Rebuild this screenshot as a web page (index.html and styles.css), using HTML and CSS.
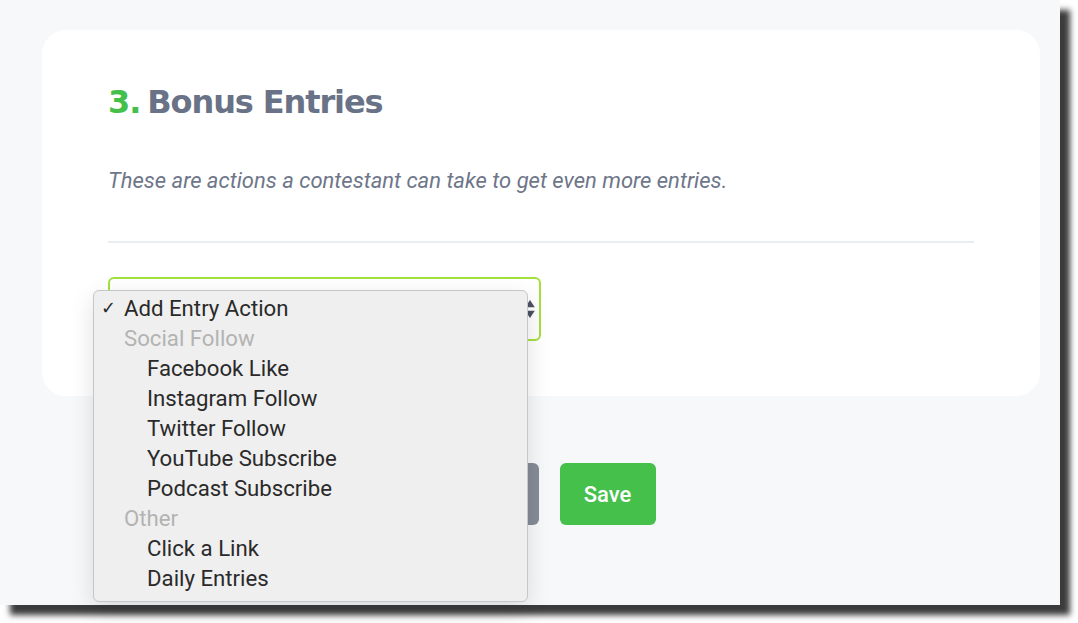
FILE: index.html
```html
<!DOCTYPE html>
<html lang="en">
<head>
<meta charset="utf-8">
<title>Bonus Entries</title>
<link rel="stylesheet" href="styles.css">
</head>
<body>
<div class="window">
  <section class="card">
    <h2 class="title"><span class="num">3.</span> Bonus Entries</h2>
    <p class="subtitle">These are actions a contestant can take to get even more entries.</p>
    <hr class="divider">
    <div class="select">
      <svg class="select-arrows" width="10" height="20" viewBox="0 0 10 20"><path d="M5 1 L9.8 8.2 H0.2 Z M5 19 L9.8 11.8 H0.2 Z" fill="#4b5162"/></svg>
    </div>
  </section>
  <div class="actions">
    <button class="btn btn-gray"></button>
    <button class="btn btn-green">Save</button>
  </div>
  <ul class="menu">
    <li class="item checked"><span class="check">✓</span>Add Entry Action</li>
    <li class="group">Social Follow</li>
    <li class="item sub">Facebook Like</li>
    <li class="item sub">Instagram Follow</li>
    <li class="item sub">Twitter Follow</li>
    <li class="item sub">YouTube Subscribe</li>
    <li class="item sub">Podcast Subscribe</li>
    <li class="group">Other</li>
    <li class="item sub">Click a Link</li>
    <li class="item sub">Daily Entries</li>
  </ul>
</div>
</body>
</html>
```
FILE: styles.css
```css
* { box-sizing: border-box; }
html, body { margin: 0; padding: 0; background: #ffffff; }
body { width: 1078px; height: 623px; overflow: hidden; }

.window {
  position: relative;
  width: 1060px;
  height: 605px;
  background: #f7f8fa;
  box-shadow: 10px 10px 6px #3b3b3b;
  padding-top: 30px;
  padding-left: 42px;
  font-family: Roboto, "Liberation Sans", sans-serif;
}

.card {
  width: 998px;
  background: #ffffff;
  border-radius: 24px;
  padding: 52px 66px 55px 66px;
}

.title {
  margin: 0;
  font-family: "DejaVu Sans", sans-serif;
  font-weight: bold;
  font-size: 32px;
  line-height: 40px;
  color: #697286;
  letter-spacing: -1.1px;
}
.title .num { color: #44c04a; margin-right: -3px; }

.subtitle {
  margin: 45px 0 0 0;
  font-family: Roboto, sans-serif;
  font-style: italic;
  font-size: 22px;
  line-height: 28px;
  color: #6e7689;
}

.divider {
  margin: 46px 0 0 0;
  border: 0;
  height: 2px;
  background: #e7eef3;
}

.select {
  margin-top: 34px;
  width: 433px;
  height: 64px;
  border: 2px solid #a4e03c;
  border-radius: 6px;
  display: flex;
  align-items: center;
  justify-content: flex-end;
  padding: 0 4px 0 16px;
}

.actions {
  width: 998px;
  margin-top: 67px;
  padding-left: 2px;
  display: flex;
  justify-content: center;
  gap: 21px;
}

.btn {
  height: 62px;
  border: 0;
  border-radius: 6px;
  font-family: Roboto, sans-serif;
  font-weight: 500;
  font-size: 22px;
  color: #ffffff;
  padding: 0;
}
.btn-gray { width: 110px; background: #858c97; }
.btn-green { width: 96px; background: #45c04b; }

.menu {
  position: absolute;
  left: 93px;
  top: 290px;
  width: 435px;
  height: 312px;
  margin: 0;
  padding: 2px 0 0 0;
  list-style: none;
  background: #efefef;
  border: 1px solid #c6c6c6;
  border-radius: 6px;
  box-shadow: 0 8px 24px rgba(0, 0, 0, 0.12);
  font-family: Roboto, "Liberation Sans", sans-serif;
  font-size: 22.2px;
}

.menu li {
  height: 30px;
  line-height: 30px;
  white-space: nowrap;
  position: relative;
  padding-left: 30px;
  color: #2a2a2a;
}
.menu li.sub { padding-left: 53px; }
.menu li.group { color: #b3b3b3; }
.menu .check {
  position: absolute;
  left: 7px;
  top: 0;
  font-size: 18px;
  color: #2a2a2a;
}
```
